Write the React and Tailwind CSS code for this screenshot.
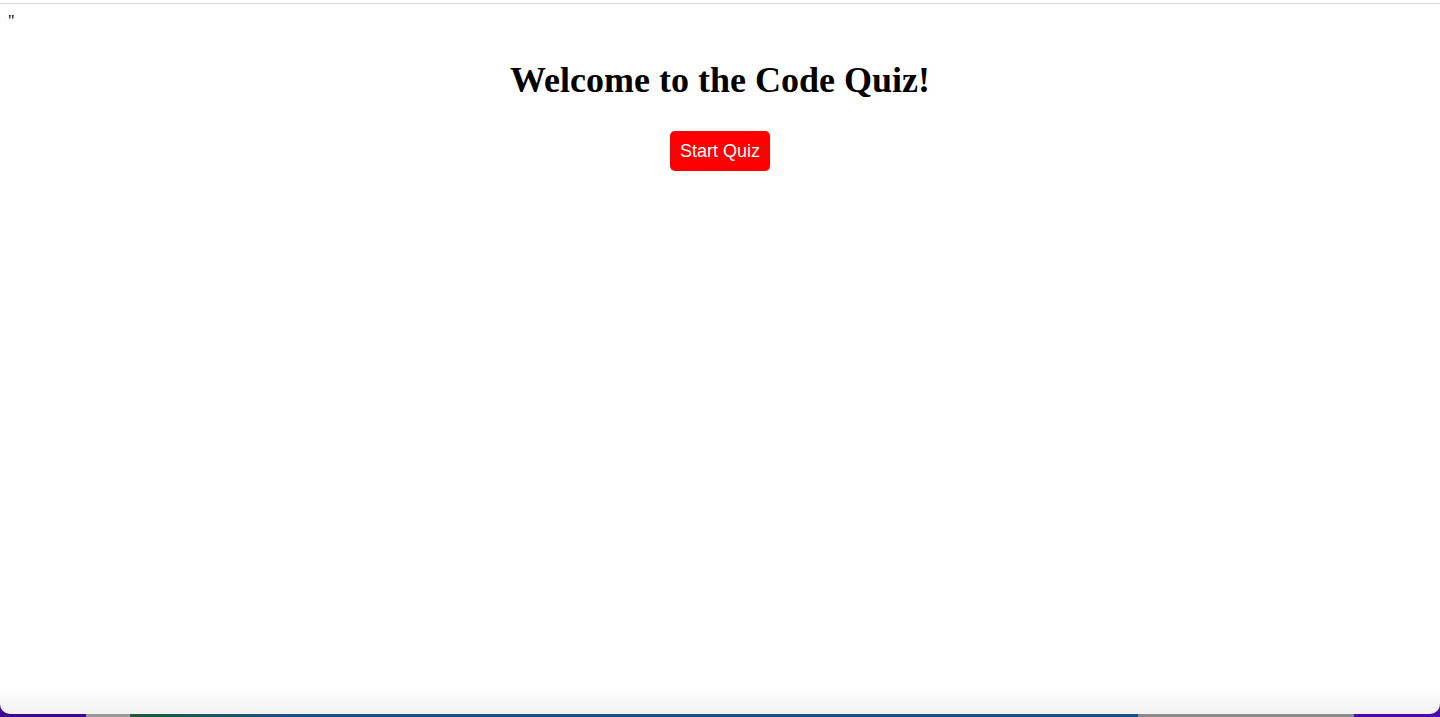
export default function App() {
  return (
    <div className="h-[717px] flex flex-col bg-[linear-gradient(to_right,#3b0a8f_0%,#3b0a8f_6%,#9a9a9a_6%,#9a9a9a_9%,#1d5a3a_9%,#1a4f86_20%,#1a4f86_79%,#8a8a8a_79%,#8a8a8a_94%,#4a0ab0_94%)]">
      <div className="h-[714px] flex flex-col bg-[linear-gradient(to_bottom,#ffffff_calc(100%-28px),#f3f3f3)] rounded-b-[10px] overflow-hidden">
        <div className="h-[3px] bg-white" />
        <div className="border-t border-[#dcdcdc] p-2 font-['Liberation_Serif',serif] text-black">
          <div className="text-base leading-[18px]">"</div>
          <h1 className="mt-[28px] text-center text-[36px] font-bold leading-[44px]">Welcome to the Code Quiz!</h1>
          <div className="mt-[29px] flex justify-center">
            <button className="h-10 w-[100px] rounded-[5px] bg-[#ff0000] font-['Liberation_Sans',sans-serif] text-lg text-white">
              Start Quiz
            </button>
          </div>
        </div>
      </div>
    </div>
  )
}
